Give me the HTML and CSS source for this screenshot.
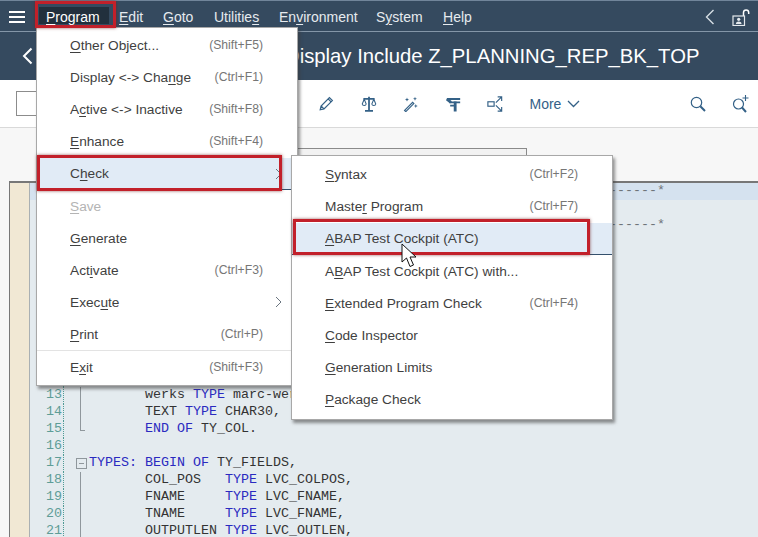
FILE: index.html
```html
<!DOCTYPE html>
<html lang="en">
<head>
<meta charset="utf-8">
<title>Display Include Z_PLANNING_REP_BK_TOP</title>
<link rel="stylesheet" href="styles.css">
</head>
<body>
<div class="page">
  <header class="shell">
    <div class="menubar">
      <svg class="burger" width="16" height="12" viewBox="0 0 16 12"><path d="M0 1h16M0 6h16M0 11h16" stroke="#fff" stroke-width="2"/></svg>
      <nav class="menus">
        <span class="m m-active"><u>P</u>rogram</span>
        <span class="m m-edit"><u>E</u>dit</span>
        <span class="m m-goto"><u>G</u>oto</span>
        <span class="m m-util">Utilitie<u>s</u></span>
        <span class="m m-env">En<u>v</u>ironment</span>
        <span class="m m-sys">S<u>y</u>stem</span>
        <span class="m"><u>H</u>elp</span>
      </nav>
      <div class="shell-icons">
        <svg width="10" height="16" viewBox="0 0 10 16"><path d="M8.500 1 1.500 8l7 7" fill="none" stroke="#d5dde4" stroke-width="1.400"/></svg>
        <svg width="18" height="18" viewBox="0 0 18 18"><path d="M11.500 8V4.500a2.600 2.600 0 0 1 5.200 0V6" fill="none" stroke="#fff" stroke-width="1.500"/><rect x="1" y="8" width="11.500" height="9.500" fill="none" stroke="#e4e9ed" stroke-width="1.200"/><circle cx="6.700" cy="11.300" r="1.600" fill="#e4e9ed"/><path d="M3.800 16c.3-2 1.400-2.600 2.900-2.600s2.600.6 2.900 2.600z" fill="#e4e9ed"/></svg>
      </div>
    </div>
    <div class="titlebar">
      <svg class="back" width="11" height="18" viewBox="0 0 11 18"><path d="M9.500 1.500 2 9l7.500 7.500" fill="none" stroke="#fff" stroke-width="2"/></svg>
      <h1 class="title">Display Include Z_PLANNING_REP_BK_TOP</h1>
    </div>
  </header>

  <div class="toolbar">
    <div class="tool-input"></div>
    <div class="tools">
      <svg width="15" height="15" viewBox="0 0 18 18"><path d="M1.500 16.500 2.500 12 12.500 2l3.500 3.500-10 10zM2.500 12 6 15.500M11 3.500 14.500 7" fill="none" stroke="#346187" stroke-width="1.500"/></svg>
      <svg width="16" height="16" viewBox="0 0 20 20"><path d="M10 1v17M5 18.500h10M3 3.500h14" fill="none" stroke="#346187" stroke-width="2.200"/><path d="M4 4 1.500 10c.4 2.500 4.600 2.500 5 0zM16 4l-2.500 6c.4 2.500 4.600 2.500 5 0z" fill="none" stroke="#346187" stroke-width="1.300"/></svg>
      <svg width="16" height="16" viewBox="0 0 20 20"><path d="M2 18 12 8l1.500 1.500-10 10z" fill="none" stroke="#346187" stroke-width="1.500"/><path d="M5 2l.7 1.800L7.500 4.500l-1.800.7L5 7l-.7-1.800L2.500 4.500l1.800-.7zM15 1l.7 1.800 1.800.7-1.800.7L15 6l-.7-1.800-1.800-.7 1.800-.7zM16 10l.7 1.800 1.800.7-1.800.7-.7 1.800-.7-1.800-1.800-.7 1.800-.7z" fill="#346187"/></svg>
      <svg width="15" height="16" viewBox="0 0 18 18"><path d="M1 3h16M4 7h13M5 11h6" fill="none" stroke="#346187" stroke-width="2.200"/><path d="M1 3 6 7M11 6v12" fill="none" stroke="#346187" stroke-width="3.400"/></svg>
      <svg width="16" height="16" viewBox="0 0 18 18"><rect x="1" y="6.500" width="7" height="5" fill="none" stroke="#346187" stroke-width="1.300"/><path d="M10 7.500 16.500 1M12 1h4.500v4.500M10 10.500l6.500 6.500M12 17h4.500v-4.500" fill="none" stroke="#346187" stroke-width="1.300"/></svg>
      <span class="more">More</span>
      <svg class="more-chev" width="13" height="8" viewBox="0 0 13 8"><path d="M1 1l5.500 5.500L12 1" fill="none" stroke="#346187" stroke-width="1.300"/></svg>
    </div>
    <div class="tools-right">
      <svg width="16" height="16" viewBox="0 0 16 16"><circle cx="6.500" cy="6.500" r="5.200" fill="none" stroke="#346187" stroke-width="1.200"/><path d="M10.300 10.300 15 15" stroke="#346187" stroke-width="2"/></svg>
      <svg width="17" height="18" viewBox="0 0 17 18"><circle cx="6.500" cy="9" r="5" fill="none" stroke="#346187" stroke-width="1.200"/><path d="M10 12.500 14 17" stroke="#346187" stroke-width="2"/><path d="M13.500 0v6M10.500 3h6" stroke="#346187" stroke-width="1.100"/></svg>
    </div>
  </div>

  <main class="content">
    <div class="tab-area"><div class="tab-box"></div></div>
    <section class="editor">
      <div class="gutter-strip"></div>
      <div class="lines">
        <div class="row row-current"><span class="num">1</span><span class="fold"></span><span class="code muted">------*</span></div>
        <div class="row"><span class="num">2</span><span class="fold"></span><span class="code"></span></div>
        <div class="row"><span class="num">3</span><span class="fold"></span><span class="code muted">------*</span></div>
        <div class="row"><span class="num">4</span><span class="fold"></span><span class="code"></span></div>
        <div class="row"><span class="num">5</span><span class="fold"></span><span class="code"></span></div>
        <div class="row"><span class="num">6</span><span class="fold"></span><span class="code"></span></div>
        <div class="row"><span class="num">7</span><span class="fold"></span><span class="code"></span></div>
        <div class="row"><span class="num">8</span><span class="fold"></span><span class="code"></span></div>
        <div class="row"><span class="num">9</span><span class="fold"></span><span class="code"></span></div>
        <div class="row"><span class="num">10</span><span class="fold"></span><span class="code"></span></div>
        <div class="row"><span class="num">11</span><span class="fold"></span><span class="code"></span></div>
        <div class="row"><span class="num">12</span><span class="fold"></span><span class="code"></span></div>
        <div class="row"><span class="num">13</span><span class="fold fold-line"></span><span class="code">       werks <b>TYPE</b> marc-werks,</span></div>
        <div class="row"><span class="num">14</span><span class="fold fold-line"></span><span class="code">       TEXT <b>TYPE</b> CHAR30,</span></div>
        <div class="row"><span class="num">15</span><span class="fold fold-end"></span><span class="code">       <b>END OF</b> TY_COL.</span></div>
        <div class="row"><span class="num">16</span><span class="fold"></span><span class="code"></span></div>
        <div class="row"><span class="num">17</span><span class="fold fold-box"></span><span class="code"><b>TYPES:</b> <b>BEGIN OF</b> TY_FIELDS,</span></div>
        <div class="row"><span class="num">18</span><span class="fold fold-line"></span><span class="code">       COL_POS   <b>TYPE</b> LVC_COLPOS,</span></div>
        <div class="row"><span class="num">19</span><span class="fold fold-line"></span><span class="code">       FNAME     <b>TYPE</b> LVC_FNAME,</span></div>
        <div class="row"><span class="num">20</span><span class="fold fold-line"></span><span class="code">       TNAME     <b>TYPE</b> LVC_FNAME,</span></div>
        <div class="row row-last"><span class="num">21</span><span class="fold fold-line"></span><span class="code">       OUTPUTLEN <b>TYPE</b> LVC_OUTLEN,</span></div>
      </div>
    </section>
  </main>

  <div class="popup popup-main">
    <div class="item"><span><u>O</u>ther Object...</span><kbd>(Shift+F5)</kbd></div>
    <div class="item"><span>Display &lt;-&gt; Cha<u>n</u>ge</span><kbd>(Ctrl+F1)</kbd></div>
    <div class="item"><span>A<u>c</u>tive &lt;-&gt; Inactive</span><kbd>(Shift+F8)</kbd></div>
    <div class="item"><span><u>E</u>nhance</span><kbd>(Shift+F4)</kbd></div>
    <div class="item item-hot"><span>C<u>h</u>eck</span><svg class="chev" width="7" height="12" viewBox="0 0 7 12"><path d="M1 1l5 5-5 5" fill="none" stroke="#6a7580"/></svg></div>
    <div class="item item-off"><span><u>S</u>ave</span></div>
    <div class="item"><span><u>G</u>enerate</span></div>
    <div class="item"><span>Act<u>i</u>vate</span><kbd>(Ctrl+F3)</kbd></div>
    <div class="item"><span>Exec<u>u</u>te</span><svg class="chev" width="7" height="12" viewBox="0 0 7 12"><path d="M1 1l5 5-5 5" fill="none" stroke="#6a7580"/></svg></div>
    <div class="item"><span><u>P</u>rint</span><kbd>(Ctrl+P)</kbd></div>
    <div class="item item-sep"><span>E<u>x</u>it</span><kbd>(Shift+F3)</kbd></div>
  </div>

  <div class="popup popup-sub">
    <div class="item"><span><u>S</u>yntax</span><kbd>(Ctrl+F2)</kbd></div>
    <div class="item"><span>Maste<u>r</u> Program</span><kbd>(Ctrl+F7)</kbd></div>
    <div class="item item-hot"><span><u>A</u>BAP Test Cockpit (ATC)</span></div>
    <div class="item"><span>A<u>B</u>AP Test Cockpit (ATC) with...</span></div>
    <div class="item"><span><u>E</u>xtended Program Check</span><kbd>(Ctrl+F4)</kbd></div>
    <div class="item"><span><u>C</u>ode Inspector</span></div>
    <div class="item"><span><u>G</u>eneration Limits</span></div>
    <div class="item"><span><u>P</u>ackage Check</span></div>
  </div>

  <div class="mark mark-program"></div>
  <div class="mark mark-check"></div>
  <div class="mark mark-atc"></div>
  <svg class="cursor" width="16" height="26" viewBox="0 0 16 26"><path d="M1 1v18l4.500-4 3.500 8.500 3.500-1.500-3.500-8h6z" fill="#fff" stroke="#111" stroke-width="1"/></svg>
</div>
</body>
</html>
```
FILE: styles.css
```css
* { box-sizing: border-box; }
html, body { margin: 0; padding: 0; }
body { font-family: "Liberation Sans", Arial, sans-serif; background: #f7f7f7; }
svg { display: block; flex: none; }
u { text-underline-offset: 2px; text-decoration-thickness: 1px; }

.page { position: relative; width: 758px; height: 537px; overflow: hidden; background: #f7f7f7; }

.shell { background: #354a5f; color: #fff; }
.menubar { height: 32px; display: flex; align-items: center; padding: 1px 9px 0; border-top: 1px solid #71859a; border-bottom: 1px solid #8496a8; }
.burger { margin-right: 21px; }
.menus { display: flex; font-size: 14px; color: #e6ebef; flex: 1; }
.m { white-space: nowrap; }
.m-active { width: 73px; color: #fff; position: relative; z-index: 3; }
.m-edit { width: 44px; }
.m-goto { width: 51px; }
.m-util { width: 65px; }
.m-env { width: 97px; }
.m-sys { width: 67px; }
.shell-icons { display: flex; align-items: center; gap: 17px; margin-right: -1px; }

.titlebar { height: 48px; display: flex; align-items: center; padding-left: 22px; }
.back { margin-right: 252px; }
.title { margin: 0; font-size: 20.3px; font-weight: 400; white-space: nowrap; color: #fff; }

.toolbar { height: 48px; background: #fff; border-bottom: 1px solid #d9d9d9; display: flex; align-items: center; padding-left: 16px; }
.tool-input { width: 22px; height: 25px; border: 1px solid #8c8c8c; margin-right: 281px; }
.tools { display: flex; align-items: center; gap: 26.5px; flex: 1; }
.more { font-size: 14px; color: #346187; }
.more-chev { margin-left: -21px; }
.tools-right { display: flex; align-items: center; gap: 26px; padding-right: 9px; }

.content { height: 410px; display: flex; flex-direction: column; }
.tab-area { height: 53px; padding: 20px 0 0 250px; }
.tab-box { width: 277px; height: 33px; background: #f2f2f2; border: 1px solid #8a8a8a; border-bottom: 0; }

.editor { flex: 1; margin-left: 9px; display: flex; border-top: 2px solid #777; border-left: 1px solid #777; background: #e4ebef; min-height: 0; }
.gutter-strip { width: 20px; background: #f1e8d4; border-right: 1px solid #aab0b3; flex: none; }
.lines { flex: 1; min-width: 0; font-family: "Liberation Mono", "Courier New", monospace; font-size: 13.33px; color: #333; }
.row { height: 17px; line-height: 15px; display: flex; white-space: pre; }
.row-last { height: 15px; }
.row-current { background: #d5e2ef; }
.num { width: 34px; flex: none; text-align: right; color: #5e9d97; border-right: 1px dotted #4f9a94; padding-right: 1px; }
.fold { width: 25px; flex: none; position: relative; }
.fold-line::before { content: ""; position: absolute; left: 16px; top: 0; height: 17px; width: 1px; background: #8f979c; }
.fold-end::before { content: ""; position: absolute; left: 16px; top: 0; height: 9px; width: 4px; border-left: 1px solid #8f979c; border-bottom: 1px solid #8f979c; }
.fold-box::before { content: ""; position: absolute; left: 12px; top: 3px; width: 9px; height: 9px; border: 1px solid #8f979c; background: linear-gradient(#8f979c, #8f979c) center / 5px 1px no-repeat; }
.code { flex: 1; }
.code b { font-weight: 400; color: #2a2ac0; }
.muted { color: #6e7479; padding-left: 520px; }

.popup { position: absolute; background: #fff; border: 1px solid #a8a8a8; box-shadow: 2px 3px 3px rgba(60, 60, 60, .55); font-size: 13.7px; color: #3f3f3f; }
.popup-main { left: 36px; top: 27px; width: 262px; height: 359px; padding-top: 1px; }
.popup-sub { left: 291px; top: 155px; width: 322px; height: 265px; padding-top: 2px; }
.item { height: 32px; display: flex; align-items: center; justify-content: space-between; white-space: nowrap; padding: 0 34px 0 33px; }
.item kbd { font-family: inherit; font-size: 12.2px; color: #767676; }
.item-hot { background: #e1ebf6; border-bottom: 1px solid #34506c; margin-top: 1px; }
.item-off { color: #b4b4b4; }
.item-sep { border-top: 1px solid #e3e3e3; height: 33px; }
.chev { margin-right: -19px; }

.mark { position: absolute; border: 3px solid #c2202a; box-shadow: 0 0 3px rgba(110, 30, 30, .7); }
.mark-program { left: 35px; top: 1px; width: 81px; height: 27px; box-shadow: inset 0 0 0 1px #354a5f, 0 0 3px rgba(110, 30, 30, .7); background: linear-gradient(#22303d, #22303d) 1px 3px / 70px 18px no-repeat; }
.mark-check { left: 37px; top: 155px; width: 245px; height: 36px; }
.mark-atc { left: 293px; top: 219px; width: 297px; height: 36px; }
.cursor { position: absolute; left: 401px; top: 243px; }
```
